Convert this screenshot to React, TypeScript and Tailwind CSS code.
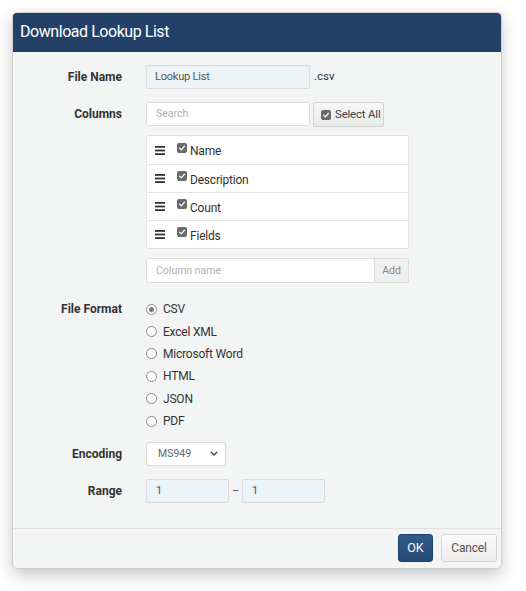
import React from "react";

const font = { fontFamily: "Roboto, 'Liberation Sans', sans-serif" };

function Check({ size = 10 }: { size?: number }) {
  return (
    <span
      className="inline-flex items-center justify-center rounded-[2px] bg-[#6a6a6a]"
      style={{ width: size, height: size }}
    >
      <svg width={size - 2} height={size - 2} viewBox="0 0 10 10">
        <path d="M2 5.2 L4.1 7.3 L8 2.8" fill="none" stroke="#fff" strokeWidth="1.6" strokeLinecap="round" strokeLinejoin="round" />
      </svg>
    </span>
  );
}

function Bars() {
  return (
    <svg width="10" height="9" viewBox="0 0 10 9" className="shrink-0">
      <rect x="0" y="0" width="10" height="1.8" fill="#333" />
      <rect x="0" y="3.6" width="10" height="1.8" fill="#333" />
      <rect x="0" y="7.2" width="10" height="1.8" fill="#333" />
    </svg>
  );
}

function Radio({ checked }: { checked?: boolean }) {
  return (
    <span className="inline-flex h-[11px] w-[11px] items-center justify-center rounded-full border border-[#8a8a8a] bg-white">
      {checked && <span className="h-[5px] w-[5px] rounded-full bg-[#7a7a7a]" />}
    </span>
  );
}

const Label = ({ children }: { children: React.ReactNode }) => (
  <div className="w-[109px] shrink-0 text-right text-[12px] font-bold text-[#333]">{children}</div>
);

export default function App() {
  const columns = ["Name", "Description", "Count", "Fields"];
  const formats = ["CSV", "Excel XML", "Microsoft Word", "HTML", "JSON", "PDF"];
  return (
    <div className="min-h-[591px] bg-white pl-[12px] pt-[12px]" style={font}>
      <div className="flex w-[490px] flex-col overflow-hidden rounded-[5px] border border-[#d0d0d0] bg-[#f3f4f4] shadow-[0_6px_16px_rgba(0,0,0,0.22)]">
        <div className="-mt-px flex h-[40px] items-center bg-[#234168] pl-[7px] text-[16px] tracking-[-0.45px] text-white">
          Download Lookup List
        </div>

        <div className="flex flex-col pt-[13px] pb-[25px]">
          {/* File name */}
          <div className="flex h-[24px] items-center gap-[24px]">
            <Label>File Name</Label>
            <div className="flex items-center gap-[4px]">
              <div className="flex h-[24px] w-[164px] items-center rounded-[2px] border border-[#d8dde0] bg-[#edf4f7] px-[8px] text-[11px] tracking-[-0.2px] text-[#555]">
                Lookup List
              </div>
              <span className="text-[11.5px] text-[#333]">.csv</span>
            </div>
          </div>

          {/* Columns */}
          <div className="mt-[13px] flex gap-[24px]">
            <div className="flex h-[24px] items-center">
              <Label>Columns</Label>
            </div>
            <div className="flex w-[263px] flex-col">
              <div className="flex items-start gap-[3px]">
                <div className="flex h-[24px] w-[164px] items-center rounded-[2px] border border-[#dcdcdc] bg-white px-[9px] text-[10.5px] text-[#b0b0b0]">
                  Search
                </div>
                <div className="flex h-[25px] w-[71px] items-center gap-[4px] rounded-[2px] border border-[#d4d4d4] bg-gradient-to-b from-[#f7f7f7] to-[#e9eaea] pl-[7px] text-[11.5px] tracking-[-0.2px] text-[#444]">
                  <Check size={10} />
                  Select All
                </div>
              </div>

              <div className="mt-[8px] flex flex-col overflow-hidden rounded-[2px] border border-[#e3e3e3] bg-white">
                {columns.map((c, i) => (
                  <div
                    key={c}
                    className={`flex h-[28px] items-center pl-[8px] text-[12px] tracking-[-0.2px] text-[#333] ${i > 0 ? "border-t border-[#e6e6e6]" : ""}`}
                  >
                    <Bars />
                    <span className="ml-[12px] -mt-[5px] flex">
                      <Check size={10} />
                    </span>
                    <span className="ml-[3px] mt-[2px]">{c}</span>
                  </div>
                ))}
              </div>

              <div className="mt-[9px] flex h-[25px]">
                <div className="flex flex-1 items-center rounded-l-[2px] border border-[#dcdcdc] bg-white px-[9px] text-[10.5px] text-[#b0b0b0]">
                  Column name
                </div>
                <div className="flex w-[34px] items-center justify-center rounded-r-[2px] border border-l-0 border-[#dcdcdc] bg-[#f0f0f0] text-[10.5px] text-[#888]">
                  Add
                </div>
              </div>
            </div>
          </div>

          {/* File format */}
          <div className="mt-[15px] flex gap-[24px]">
            <div className="flex h-[22.4px] items-center">
              <Label>File Format</Label>
            </div>
            <div className="flex flex-col">
              {formats.map((f, i) => (
                <div key={f} className="flex h-[22.4px] items-center gap-[6px] text-[12px] tracking-[-0.2px] text-[#333]">
                  <Radio checked={i === 0} />
                  <span>{f}</span>
                </div>
              ))}
            </div>
          </div>

          {/* Encoding */}
          <div className="mt-[9.6px] flex h-[24px] items-center gap-[24px]">
            <Label>Encoding</Label>
            <div className="flex h-[24px] w-[80px] items-center justify-between rounded-[3px] border border-[#d8d8d8] bg-white pl-[11px] pr-[7px] text-[10.5px] text-[#666]">
              <span>MS949</span>
              <svg width="8" height="5" viewBox="0 0 8 5">
                <path d="M0.8 0.8 L4 4 L7.2 0.8" fill="none" stroke="#444" strokeWidth="1.3" />
              </svg>
            </div>
          </div>

          {/* Range */}
          <div className="mt-[13px] flex h-[24px] items-center gap-[24px]">
            <Label>Range</Label>
            <div className="flex items-center">
              <div className="flex h-[24px] w-[83px] items-center rounded-[2px] border border-[#d8dde0] bg-[#edf4f7] px-[9px] text-[11px] text-[#555]">
                1
              </div>
              <span className="w-[13px] text-center text-[11px] text-[#555]">–</span>
              <div className="flex h-[24px] w-[83px] items-center rounded-[2px] border border-[#d8dde0] bg-[#edf4f7] px-[9px] text-[11px] text-[#555]">
                1
              </div>
            </div>
          </div>
        </div>

        <div className="flex h-[40px] items-center justify-end gap-[8px] border-t border-[#e2e2e2] pr-[4px]">
          <div className="flex h-[28px] w-[35px] items-center justify-center rounded-[3px] border border-[#1f406a] bg-gradient-to-b from-[#315b8c] to-[#264a76] text-[12.5px] text-white">
            OK
          </div>
          <div className="flex h-[28px] w-[56px] items-center justify-center rounded-[3px] border border-[#d6d6d6] bg-gradient-to-b from-[#fafafa] to-[#ececec] text-[12px] tracking-[-0.2px] text-[#555]">
            Cancel
          </div>
        </div>
      </div>
    </div>
  );
}
